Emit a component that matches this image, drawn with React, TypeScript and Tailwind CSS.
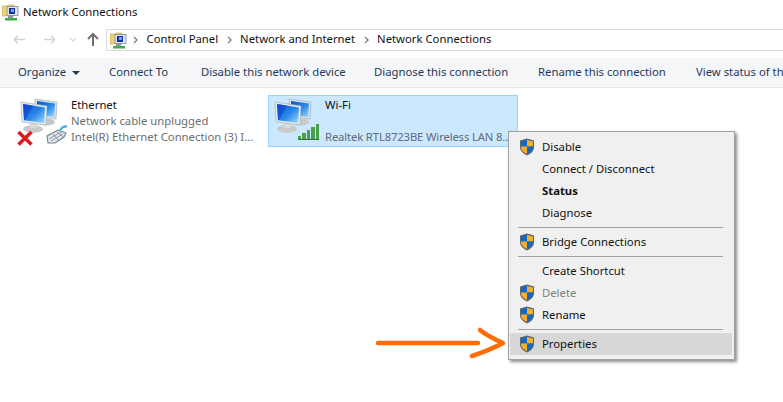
import { useId } from "react";

const font = { fontFamily: '"Noto Sans", sans-serif' };

function Shield() {
  return (
    <svg width="16" height="18" viewBox="0 0 16 18" className="shrink-0">
      <path d="M8 .5 L15 2.500 V9 C15 13 12 15.500 8 17.500 C4 15.500 1 13 1 9 V2.500 Z" fill="#5b6470" />
      <path d="M8 2 V8.500 H2 V3.400 Z" fill="#1268c4" />
      <path d="M8 2 L14 3.400 V8.500 H8 Z" fill="#f5b02a" />
      <path d="M2 8.500 H8 V16 C4.800 14.500 2 12.500 2 9 Z" fill="#f5b02a" />
      <path d="M8 8.500 H14 V9 C14 12.500 11.200 14.500 8 16 Z" fill="#1268c4" />
    </svg>
  );
}

function Monitors() {
  const id = useId();
  return (
    <svg width="42" height="38" viewBox="0 0 42 38" className="block">
      <defs>
        <linearGradient id={id} x1="0" y1="0" x2="1" y2="1">
          <stop offset="0" stopColor="#0f4fd6" />
          <stop offset="0.55" stopColor="#2a8ae8" />
          <stop offset="1" stopColor="#a8dcf8" />
        </linearGradient>
      </defs>
      <ellipse cx="27" cy="25" rx="9" ry="3.500" fill="#c4c8c8" />
      <path d="M16 2 L38 5 L37 22 L16 19 Z" fill="#d8e2e8" stroke="#9fb0ba" strokeWidth="0.7" />
      <path d="M18 4 L36 6.500 L35.200 20 L18 17.500 Z" fill={`url(#${id})`} />
      <ellipse cx="14" cy="32" rx="10" ry="4" fill="#c8cbcb" />
      <rect x="11" y="24" width="7" height="7" fill="#d8dada" />
      <path d="M2 5 L28 9 L27 28 L3 25 Z" fill="#e4ecf0" stroke="#9fb0ba" strokeWidth="0.7" />
      <path d="M4 7 L26 10.500 L25.200 26 L5 23.200 Z" fill={`url(#${id})`} />
      <path d="M4 7 L14 8.600 L6 23.300 L5 23.200 Z" fill="#0b3fc4" opacity="0.55" />
    </svg>
  );
}

function EthernetIcon() {
  return (
    <div className="relative h-[50px] w-[50px] shrink-0">
      <div className="ml-[2px] mt-[1px]">
        <Monitors />
      </div>
      {/* red cross and RJ45 plug */}
      <svg width="52" height="22" viewBox="0 0 52 22" className="absolute left-0 top-[28px]">
        <path d="M1.500 7 L14.500 19.500 M14.500 7 L1.500 19.500" stroke="#d81e1e" strokeWidth="3.600" />
        <path d="M30 11 L41 5 L49 8 L47 12 L38 18 L31 18 Z" fill="#e2e9ed" stroke="#71818a" strokeWidth="1.100" />
        <path d="M32 14 L44 7 M34 16 L46 9 M36 9 L42 16 M40 7 L46 12" stroke="#7f8f98" strokeWidth="0.9" />
        <path d="M43 5 L46 2 L50 1" stroke="#4fb0e0" strokeWidth="2.400" fill="none" />
      </svg>
    </div>
  );
}

function WifiIcon() {
  const bars = [3, 6, 9, 12, 15];
  return (
    <div className="relative h-[50px] w-[50px] shrink-0">
      <div className="ml-[2px] mt-[1px]">
        <Monitors />
      </div>
      <div className="absolute left-[27px] top-[28px] flex h-[15px] items-end gap-[1px] border-b border-[#2f6f30]">
        {bars.map((h) => (
          <div key={h} className="w-[3.4px] bg-[#4a9f4b]" style={{ height: h }} />
        ))}
      </div>
    </div>
  );
}

function FolderIcon({ className }: { className?: string }) {
  return (
    <svg width="17" height="17" viewBox="0 0 17 17" className={className}>
      <path d="M0 2 H5 L6.500 1 H12 V12 H0 Z" fill="#f0d176" stroke="#c9a445" strokeWidth="0.6" />
      <rect x="5" y="2.500" width="11" height="9" fill="#dfe5ea" stroke="#7c8aa0" strokeWidth="0.8" />
      <rect x="7" y="4" width="6" height="6" fill="#16309c" />
      <rect x="9" y="5" width="3" height="3" fill="#6ea8ec" />
      <rect x="6" y="12" width="5" height="2" fill="#8a98a8" />
      <rect x="3" y="14" width="12" height="2.500" fill="#3fae4a" />
    </svg>
  );
}

const Sep = () => (
  <div className="flex h-[7px] items-center pl-[8px] pr-[9px]">
    <div className="h-px w-full bg-[#a0a0a0]" />
  </div>
);

function MenuRow({
  label,
  shield,
  bold,
  off,
  hot,
}: {
  label: string;
  shield?: boolean;
  bold?: boolean;
  off?: boolean;
  hot?: boolean;
}) {
  return (
    <div className={`flex h-[22px] items-center ${hot ? "bg-[#d7d7d7]" : ""}`}>
      <div className="flex w-[32px] justify-end">
        <div className="mr-[7px] w-[16px]">{shield && <Shield />}</div>
      </div>
      <span className={`${bold ? "font-bold" : ""} ${off ? "text-[#7f7f7f]" : "text-[#111]"}`}>{label}</span>
    </div>
  );
}

function Crumb({ label }: { label: string }) {
  return (
    <>
      <svg width="5" height="8" viewBox="0 0 5 8">
        <path d="M1 1 L4 4 L1 7" fill="none" stroke="#808080" strokeWidth="1.400" />
      </svg>
      <span>{label}</span>
    </>
  );
}

const tools = [
  { label: "Organize", w: "w-[91px]" },
  { label: "Connect To", w: "w-[92px]" },
  { label: "Disable this network device", w: "w-[173px]" },
  { label: "Diagnose this connection", w: "w-[164px]" },
  { label: "Rename this connection", w: "w-[158px]" },
  { label: "View status of this connection", w: "w-[200px]" },
];

export default function App() {
  return (
    <div className="relative h-[402px] w-[783px] overflow-hidden whitespace-nowrap bg-white text-[11.3px] text-[#111]" style={font}>
      <div className="flex h-[29px] items-center pb-[4px] pl-[2px]">
        <FolderIcon />
        <span className="ml-[4px]">Network Connections</span>
      </div>

      <div className="flex h-[22px] items-center">
        <div className="relative h-full w-[106px]">
          <svg width="100" height="22" viewBox="0 0 100 22" className="block">
            <path d="M14 10.500 H25 M14 10.500 L18 6.500 M14 10.500 L18 14.500" stroke="#d4d4d4" strokeWidth="1.500" fill="none" />
            <path d="M44 10.500 H55 M55 10.500 L51 6.500 M55 10.500 L51 14.500" stroke="#d4d4d4" strokeWidth="1.500" fill="none" />
            <path d="M70 9 L73 12 L76 9" stroke="#d4d4d4" strokeWidth="1.200" fill="none" />
            <path d="M93 17 V5 M88 10 L93 5 L98 10" stroke="#707070" strokeWidth="2" fill="none" />
          </svg>
        </div>
        <div className="flex h-[22px] flex-1 items-center border-y border-l border-[#d9d9d9] pl-[3px]">
          <FolderIcon />
          <div className="ml-[6px] flex items-center gap-[8.5px] pb-[1px]">
            <Crumb label="Control Panel" />
            <Crumb label="Network and Internet" />
            <Crumb label="Network Connections" />
          </div>
        </div>
      </div>

      <div className="mt-[7px] flex h-[30px] items-center overflow-hidden border-b border-[#e5e5e5] bg-[#f5f6f7] pl-[18px] text-[#1e395b]">
        {tools.map((t, i) => (
          <div key={t.label} className={`flex shrink-0 items-center ${t.w}`}>
            {t.label}
            {i === 0 && <div className="ml-[6px] mt-[1px] h-0 w-0 border-x-[4px] border-t-[4px] border-x-transparent border-t-[#1e395b]" />}
          </div>
        ))}
      </div>

      <div className="flex gap-[4px] pl-[14px] pt-[7px]">
        <div className="flex h-[52px] w-[250px] border border-transparent">
          <div className="ml-[2px]">
            <EthernetIcon />
          </div>
          <div className="ml-[4px] flex flex-col pt-[1px] leading-[16px]">
            <span>Ethernet</span>
            <span className="text-[#6d6d6d]">Network cable unplugged</span>
            <span className="text-[#6d6d6d]">Intel(R) Ethernet Connection (3) I...</span>
          </div>
        </div>
        <div className="flex h-[52px] w-[250px] border border-[#99d1ff] bg-[#cce8ff]">
          <div className="ml-[2px]">
            <WifiIcon />
          </div>
          <div className="ml-[4px] flex flex-col pt-[1px] leading-[16px]">
            <span>Wi-Fi</span>
            <span className="h-[16px]" />
            <span className="tracking-[-0.15px] text-[#5f6b75]">Realtek RTL8723BE Wireless LAN 8...</span>
          </div>
        </div>
      </div>

      <div className="absolute left-[508px] top-[131px] w-[227px] border border-[#a0a0a0] bg-[#f0f0f0] pb-[4px] pl-[1px] pr-[2px] pt-[4px] shadow-[2px_2px_3px_rgba(0,0,0,0.45)]">
        <MenuRow label="Disable" shield />
        <MenuRow label="Connect / Disconnect" />
        <MenuRow label="Status" bold />
        <MenuRow label="Diagnose" />
        <Sep />
        <MenuRow label="Bridge Connections" shield />
        <Sep />
        <MenuRow label="Create Shortcut" />
        <MenuRow label="Delete" shield off />
        <MenuRow label="Rename" shield />
        <Sep />
        <MenuRow label="Properties" shield hot />
      </div>

      <svg width="140" height="34" viewBox="0 0 140 34" className="absolute left-[372px] top-[326px]">
        <path
          d="M6 17 H106 M108 4 C114 9 122 13 131 17 C122 22 112 26 100 30"
          fill="none"
          stroke="#ff6c0a"
          strokeWidth="4.500"
          strokeLinecap="round"
          strokeLinejoin="round"
        />
      </svg>
    </div>
  );
}
